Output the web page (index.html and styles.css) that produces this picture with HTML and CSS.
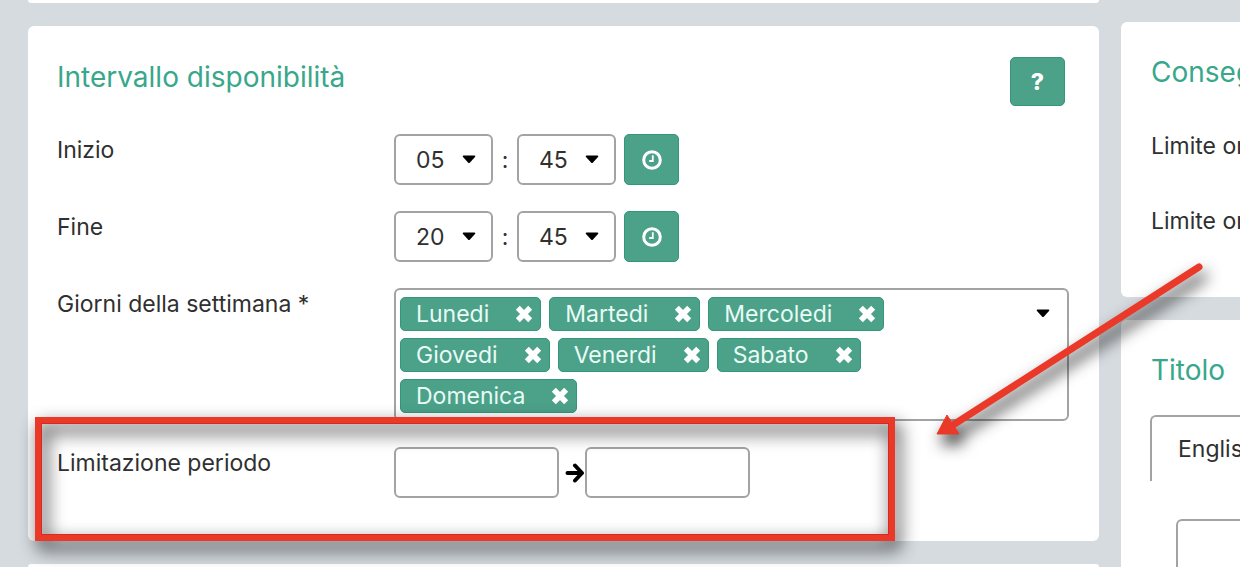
FILE: index.html
```html
<!DOCTYPE html>
<html lang="it">
<head>
  <meta charset="UTF-8" />
  <meta name="viewport" content="width=device-width, initial-scale=1.0" />
  <title>Intervallo disponibilità</title>
  <link rel="stylesheet" href="styles.css">
</head>

<body>
  <!-- Shared icons -->
  <svg class="sprite" aria-hidden="true">
    <symbol id="caret" viewBox="0 0 14 9"><path d="M1.500 0.500H12.500Q14 0.500 13 2L8 7.500Q7 8.500 6 7.500L1 2Q0 0.500 1.500 0.500Z" /></symbol>
    <symbol id="clock" viewBox="0 0 20 20">
      <circle cx="10" cy="10" r="8.300" fill="none" stroke="currentColor" stroke-width="3" />
      <path d="M10.800 5.200V11H7.200" fill="none" stroke="currentColor" stroke-width="1.800" />
    </symbol>
    <symbol id="times" viewBox="0 0 16 16"><path d="M2.500 2.500L13.500 13.500M13.500 2.500L2.500 13.500" fill="none" stroke="currentColor" stroke-width="5" /></symbol>
    <symbol id="arrow" viewBox="0 0 20 20"><path d="M2.500 10H16M10 2.500L17 10L10 17.500" fill="none" stroke="currentColor" stroke-width="4" stroke-linecap="round" stroke-linejoin="round" /></symbol>
  </svg>

  <main class="page">
    <div class="column">
      <div class="card card-previous"></div>

      <!-- Availability -->
      <section class="card availability">
        <header class="card-header">
          <h2>Intervallo disponibilità</h2>
          <button type="button" class="btn btn-help">?</button>
        </header>

        <form class="rows">
          <div class="row">
            <label for="startHour">Inizio</label>
            <div class="time">
              <span class="select"><select id="startHour"><option>05</option></select><svg class="caret"><use href="#caret" /></svg></span>
              <span class="colon">:</span>
              <span class="select"><select aria-label="Inizio, minuti"><option>45</option></select><svg class="caret"><use href="#caret" /></svg></span>
              <button type="button" class="btn" aria-label="Ora di inizio"><svg class="clock"><use href="#clock" /></svg></button>
            </div>
          </div>

          <div class="row">
            <label for="endHour">Fine</label>
            <div class="time">
              <span class="select"><select id="endHour"><option>20</option></select><svg class="caret"><use href="#caret" /></svg></span>
              <span class="colon">:</span>
              <span class="select"><select aria-label="Fine, minuti"><option>45</option></select><svg class="caret"><use href="#caret" /></svg></span>
              <button type="button" class="btn" aria-label="Ora di fine"><svg class="clock"><use href="#clock" /></svg></button>
            </div>
          </div>

          <div class="row">
            <span id="daysLabel" class="label">Giorni della settimana *</span>
            <div class="multiselect" role="group" aria-labelledby="daysLabel">
              <div class="tags">
                <span class="tag">Lunedi <button type="button" aria-label="Rimuovi Lunedi"><svg><use href="#times" /></svg></button></span>
                <span class="tag">Martedi <button type="button" aria-label="Rimuovi Martedi"><svg><use href="#times" /></svg></button></span>
                <span class="tag">Mercoledi <button type="button" aria-label="Rimuovi Mercoledi"><svg><use href="#times" /></svg></button></span>
                <span class="tag">Giovedi <button type="button" aria-label="Rimuovi Giovedi"><svg><use href="#times" /></svg></button></span>
                <span class="tag">Venerdi <button type="button" aria-label="Rimuovi Venerdi"><svg><use href="#times" /></svg></button></span>
                <span class="tag">Sabato <button type="button" aria-label="Rimuovi Sabato"><svg><use href="#times" /></svg></button></span>
                <span class="tag">Domenica <button type="button" aria-label="Rimuovi Domenica"><svg><use href="#times" /></svg></button></span>
              </div>
              <svg class="caret"><use href="#caret" /></svg>
            </div>
          </div>

          <div class="row">
            <label for="periodFrom">Limitazione periodo</label>
            <div class="period">
              <input type="text" id="periodFrom">
              <svg class="arrow"><use href="#arrow" /></svg>
              <input type="text" aria-label="Fine periodo">
            </div>
          </div>
        </form>

        <div class="highlight"></div>
        <svg class="pointer" viewBox="0 0 300 210">
          <path d="M278 22L32 180" fill="none" stroke="#ea3829" stroke-width="7" stroke-linecap="round" />
          <path d="M16 189L26 170L38 189Z" fill="#ea3829" stroke="#ea3829" />
        </svg>
      </section>

      <div class="card card-next"></div>
    </div>

    <div class="column side">
      <!-- Delivery -->
      <section class="card delivery">
        <h2>Consegna</h2>
        <p>Limite orario</p>
        <p>Limite ordini</p>
      </section>

      <!-- Title -->
      <section class="card title-card">
        <h2>Titolo</h2>
        <button type="button" class="tab">English</button>
        <input type="text" class="title-input" aria-label="Titolo">
      </section>
    </div>
  </main>
</body>

</html>
```
FILE: styles.css
```css
:root {
  --bg-color: #d5dbdf;
  --card-bg: #ffffff;
  --primary: #4ca189;
  --primary-dark: #32977b;
  --heading: #38a78b;
  --border: #a3a3a3;
  --text-dark: #303030;
  --mark: #ea3829;
}

* {
  margin: 0;
  padding: 0;
  box-sizing: border-box;
}

body {
  font-family: Inter, "Liberation Sans", sans-serif;
  font-size: 23px;
  line-height: 32px;
  background-color: var(--bg-color);
  color: var(--text-dark);
  height: 100vh;
  overflow: hidden;
}

button, input, select {
  font: inherit;
  color: inherit;
}

h2 {
  font-size: 28px;
  font-weight: 400;
  line-height: 40px;
  color: var(--heading);
}

.sprite {
  display: none;
}

.page {
  display: grid;
  grid-template-columns: 9fr 1fr;
  gap: 22px;
  height: 100%;
  padding-left: 28px;
}

.column {
  display: flex;
  flex-direction: column;
  gap: 23px;
  min-width: 0;
}

.card {
  background-color: var(--card-bg);
  border-radius: 6px;
}

.card-previous {
  height: 3px;
  border-radius: 0 0 6px 6px;
}

.card-next {
  flex: 1;
  border-radius: 6px 6px 0 0;
}

.availability {
  position: relative;
  padding: 31px 30px 43px 29px;
}

.card-header {
  display: flex;
  justify-content: space-between;
  margin: 0 4px 28px 0;
}

.btn {
  display: flex;
  align-items: center;
  justify-content: center;
  width: 55px;
  height: 51px;
  background-color: var(--primary);
  border: 1px solid var(--primary-dark);
  border-radius: 5px;
  color: #fff;
  cursor: pointer;
}

.btn-help {
  height: 49px;
  font-weight: 800;
}

.rows {
  display: flex;
  flex-direction: column;
  gap: 26px;
}

.row {
  display: grid;
  grid-template-columns: 337px 1fr;
  align-items: start;
}

.time, .period {
  display: flex;
  align-items: center;
}

.time .btn {
  margin-left: 8px;
}

.colon {
  width: 24px;
  text-align: center;
}

.select {
  display: grid;
  align-items: center;
  width: 99px;
}

.select > * {
  grid-area: 1 / 1;
}

select {
  appearance: none;
  width: 100%;
  height: 51px;
  padding-left: 20px;
  background-color: #fff;
  border: 2px solid var(--border);
  border-radius: 6px;
}

.select .caret {
  justify-self: end;
  margin-right: 17px;
  pointer-events: none;
}

.caret {
  width: 14px;
  height: 9px;
  fill: #000;
}

.clock, .arrow {
  width: 20px;
  height: 20px;
}

.multiselect {
  display: flex;
  justify-content: space-between;
  padding: 7px 17px 6px 4px;
  border: 2px solid var(--border);
  border-radius: 6px;
}

.multiselect .caret {
  flex: none;
  margin-top: 12px;
}

.tags {
  display: flex;
  flex-wrap: wrap;
  gap: 7px 8px;
  padding-right: 32px;
}

.tag {
  display: flex;
  align-items: center;
  gap: 26px;
  height: 34px;
  padding: 0 7px 0 15px;
  background-color: var(--primary);
  border: 1px solid var(--primary-dark);
  border-radius: 5px;
  color: #e9fbf5;
}

.tag button {
  display: flex;
  background: none;
  border: none;
  color: #fff;
  cursor: pointer;
}

.tag svg {
  width: 18px;
  height: 18px;
}

input {
  width: 165px;
  height: 51px;
  padding: 0 12px;
  background-color: #fff;
  border: 2px solid var(--border);
  border-radius: 6px;
}

.arrow {
  margin-left: 6px;
  color: #000;
}

/* red frame and arrow drawn over the card */
.highlight {
  position: absolute;
  left: 7px;
  right: 204px;
  bottom: 0;
  height: 124px;
  border: 7px solid var(--mark);
  outline: 1px solid #d42b1e;
  outline-offset: -7px;
  filter: drop-shadow(4px 8px 9px rgba(0, 0, 0, 0.9));
  pointer-events: none;
}

.pointer {
  position: absolute;
  right: -122px;
  bottom: 86px;
  width: 300px;
  height: 210px;
  overflow: visible;
  filter: drop-shadow(4px 9px 8px rgba(0, 0, 0, 0.9));
  pointer-events: none;
}

.side {
  padding-top: 22px;
  overflow: hidden;
  white-space: nowrap;
}

.side .card {
  padding: 30px 0 0 30px;
  border-radius: 6px 0 0 6px;
}

.delivery {
  display: flex;
  flex-direction: column;
  gap: 43px;
}

.side .delivery {
  padding-bottom: 60px;
}

.delivery h2 {
  margin-bottom: -5px;
}

.side .title-card {
  display: flex;
  flex: 1;
  flex-direction: column;
  border-radius: 6px 0 0 0;
}

.tab {
  height: 66px;
  margin: 25px 0 38px -1px;
  padding-left: 26px;
  background: none;
  border: 2px solid var(--border);
  border-width: 2px 0 0 2px;
  border-radius: 6px 0 0 0;
  text-align: left;
}

.title-input {
  width: auto;
  flex: 1;
  margin-left: 25px;
  border-width: 2px 0 0 2px;
  border-radius: 6px 0 0 0;
}
```
